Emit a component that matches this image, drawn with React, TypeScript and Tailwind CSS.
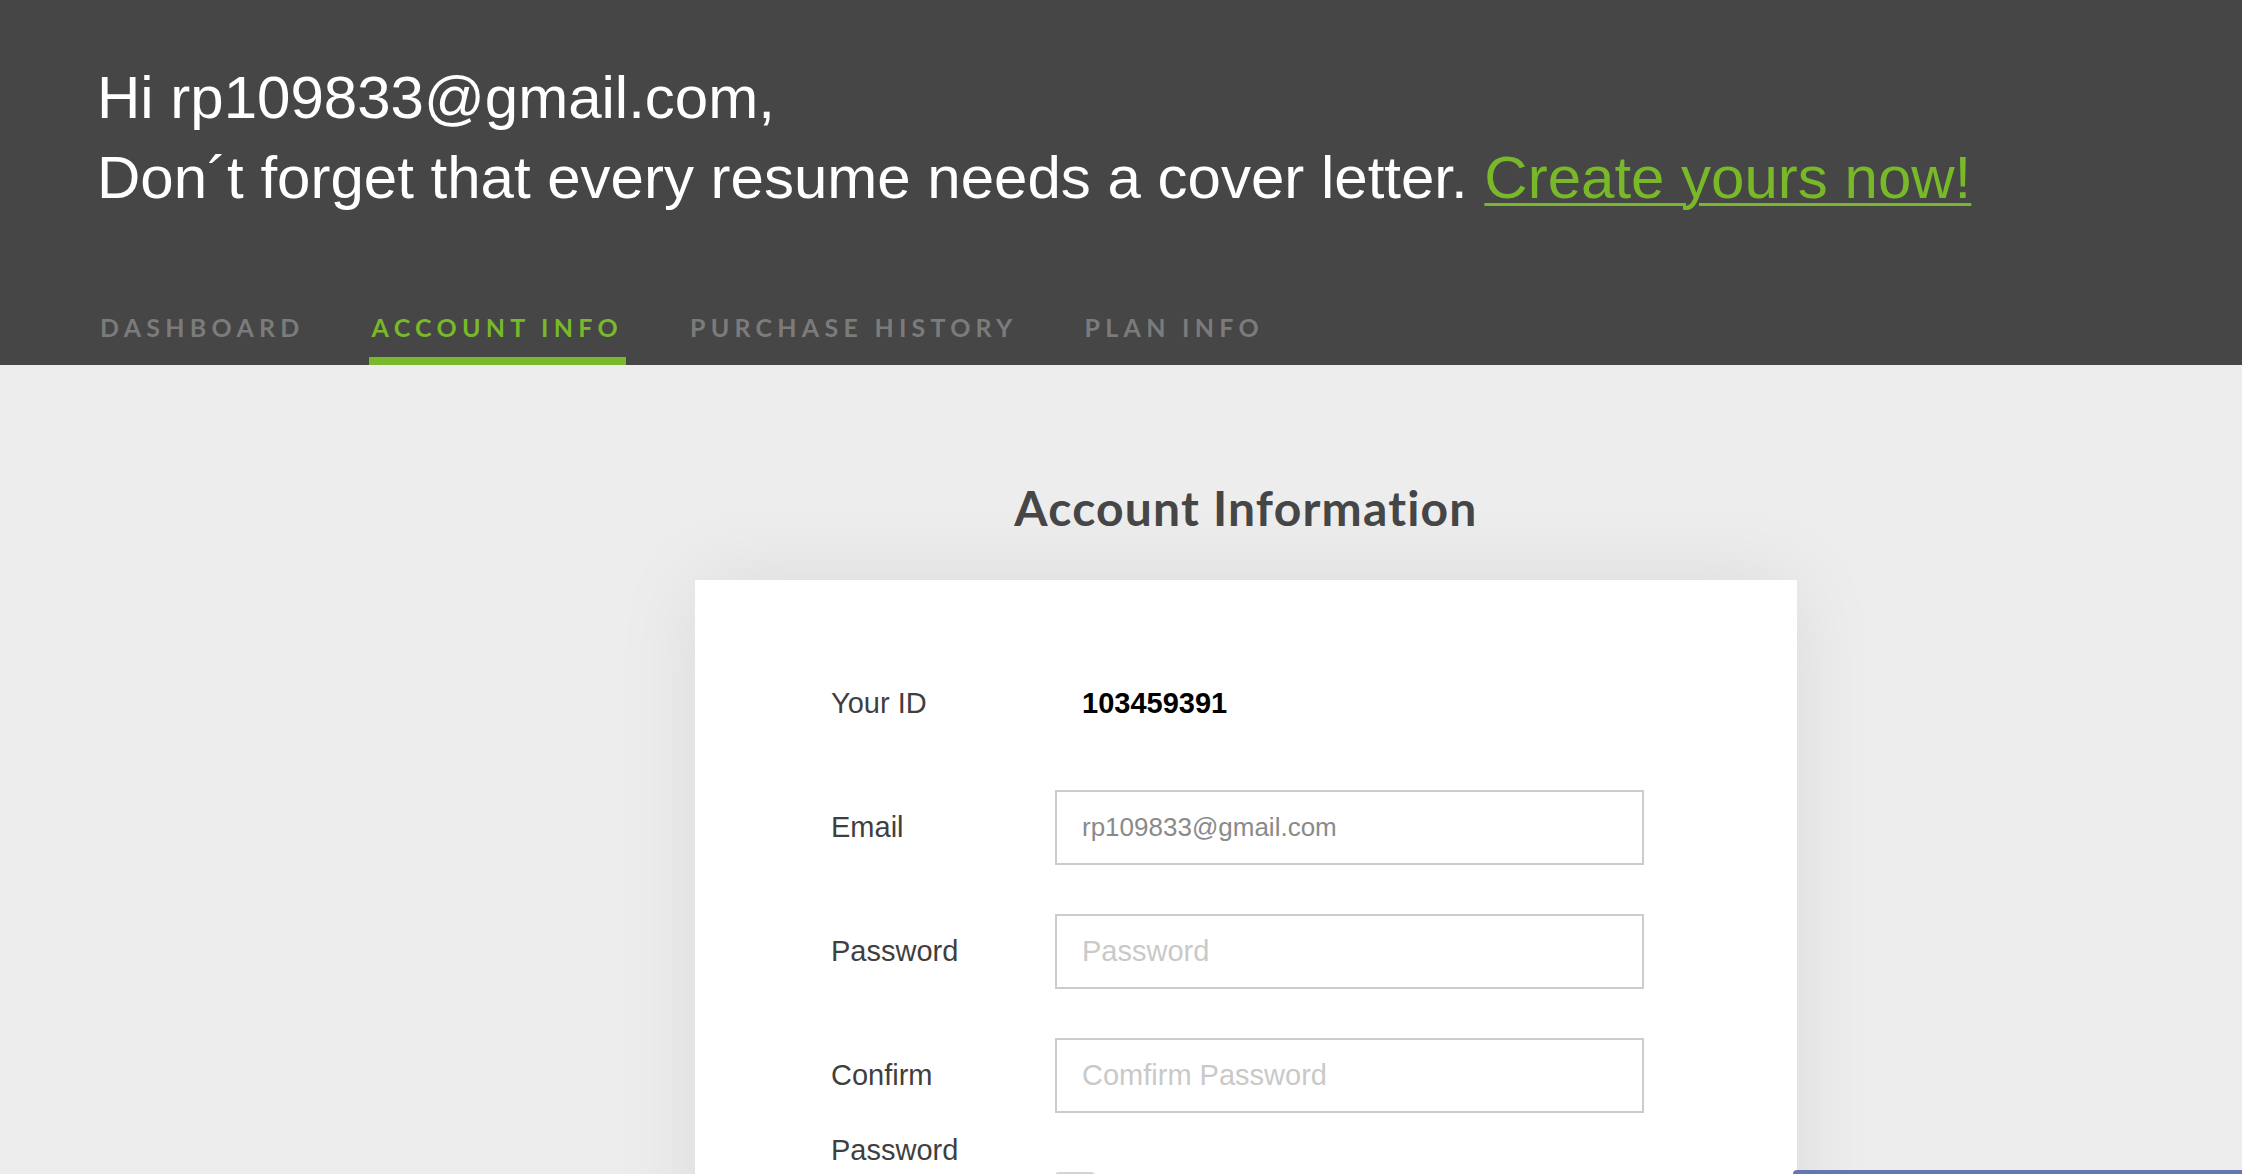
import React from 'react';

const tabs = [
  { label: 'DASHBOARD', active: false },
  { label: 'ACCOUNT INFO', active: true },
  { label: 'PURCHASE HISTORY', active: false },
  { label: 'PLAN INFO', active: false },
];

const Field = ({ label, children }: { label: string; children: React.ReactNode }) => (
  <div className="flex">
    <div className="w-[200px] mr-[24px] text-[29px] leading-[75px] text-[#3f3f3f]">{label}</div>
    <div className="flex flex-col">{children}</div>
  </div>
);

export default function App() {
  return (
    <div className="min-h-screen bg-[#ededed] font-['Liberation_Sans',Arial,sans-serif] relative overflow-hidden">
      {/* Greeting header */}
      <header className="bg-[#464646] pl-[97px]">
        <div className="pt-[58px] text-[60px] leading-[80px] text-white">
          <p>Hi rp109833@gmail.com,</p>
          <p>
            Don´t forget that every resume needs a cover letter.{' '}
            <a href="#" className="text-[#78b829] underline decoration-[3px] underline-offset-[5px]">
              Create yours now!
            </a>
          </p>
        </div>

        {/* Tabs */}
        <nav className="mt-[97px] flex gap-[61px]">
          {tabs.map(t => (
            <div
              key={t.label}
              className={
                t.active
                  ? "px-[3px] pb-[17px] border-b-[8px] border-[#78b829] text-[#78b829]"
                  : "px-[3px] pb-[17px] border-b-[8px] border-transparent text-[#7b7b7b]"
              }
            >
              <span className="block font-['Lato',sans-serif] font-bold text-[25px] leading-none tracking-[0.21em]">
                {t.label}
              </span>
            </div>
          ))}
        </nav>
      </header>

      {/* Account information */}
      <main className="pl-[695px]">
        <div className="w-[1102px]">
          <h1 className="mt-[119px] text-center font-['Lato',sans-serif] font-bold text-[48px] leading-none tracking-[1.2px] text-[#464646]">
            Account Information
          </h1>

          <section className="mt-[48px] bg-white shadow-[0_0_80px_rgba(0,0,0,0.08)] pt-[86px] pl-[136px] pb-[200px] flex flex-col gap-[49px]">
            <div className="flex">
              <div className="w-[200px] mr-[24px] text-[29px] leading-[75px] text-[#3f3f3f]">Your ID</div>
              <div className="pl-[27px] text-[29px] leading-[75px] font-bold text-black">103459391</div>
            </div>

            <Field label="Email">
              <input
                defaultValue="rp109833@gmail.com"
                className="w-[589px] h-[75px] border-2 border-[#cccccc] px-[25px] text-[26px] text-[#8a8a8a] outline-none"
              />
            </Field>

            <Field label="Password">
              <input
                type="password"
                placeholder="Password"
                className="w-[589px] h-[75px] border-2 border-[#cccccc] px-[25px] text-[29px] text-[#555] placeholder:text-[#c9c9c9] outline-none"
              />
            </Field>

            <Field label="Confirm Password">
              <input
                type="password"
                placeholder="Comfirm Password"
                className="w-[589px] h-[75px] border-2 border-[#cccccc] px-[25px] text-[29px] text-[#555] placeholder:text-[#c9c9c9] outline-none"
              />
              <div className="mt-[59px] w-[40px] h-[40px] border-2 border-[#d4d4d4] rounded-[4px]" />
            </Field>
          </section>
        </div>
      </main>

      {/* Chat widget peeking at bottom */}
      <div className="fixed bottom-0 right-0 w-[449px] h-[4px] rounded-tl-[14px] bg-[#6577b3]" />
    </div>
  );
}
